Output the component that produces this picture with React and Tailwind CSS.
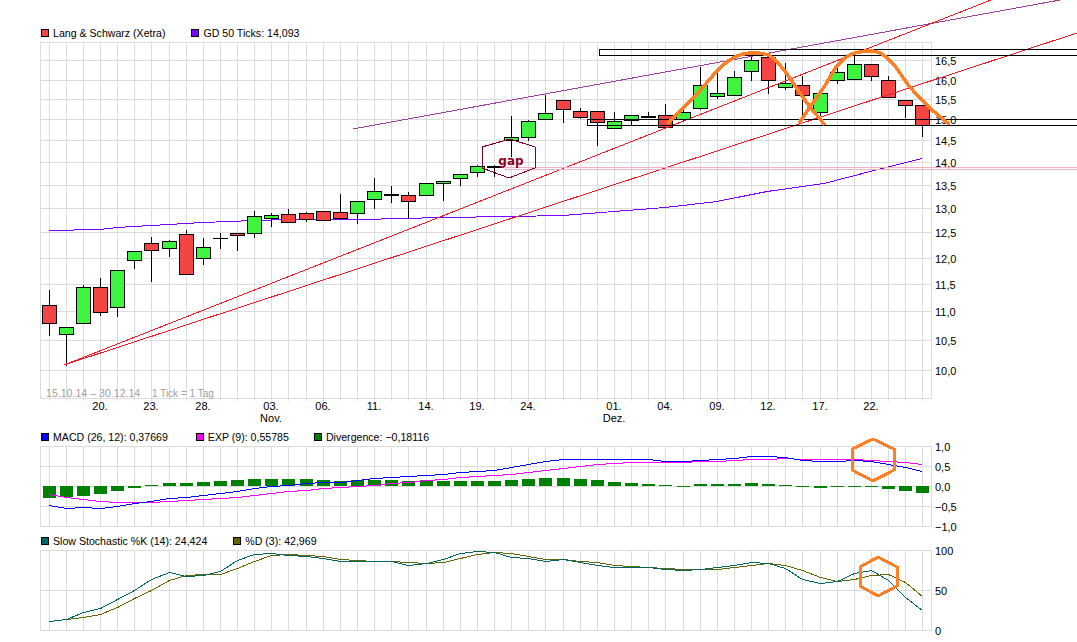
import React from 'react';

// x pixel column of each tick
const XS = [49,66,83,100,117,134,151,169,186,203,220,237,254,271,288,306,323,340,357,374,391,408,426,443,460,477,494,511,528,545,563,580,597,614,631,648,665,683,700,717,734,751,768,785,802,820,837,854,871,888,905,922];
const GRID = '#dcdcdc';
const RED = '#f44444';
const GREEN = '#3ef43e';
const ORANGE = '#ff8024';

// high, body top, body bottom, low, kind
const CANDLES = [
  [290,305,323,335,'r'],[327,327,334,365,'g'],[285,287,323,323,'g'],[278,287,312,315,'r'],[270,270,307,316,'g'],
  [251,251,260,268,'g'],[237,243,250,281,'r'],[240,241,248,256,'g'],[230,234,274,274,'r'],[238,247,258,264,'g'],
  [233,238,238,248,'d'],[233,233,235,250,'r'],[211,216,233,237,'g'],[213,215,218,226,'g'],[209,214,222,222,'r'],
  [212,213,219,221,'r'],[211,211,220,220,'r'],[194,212,218,218,'r'],[201,201,213,223,'g'],[178,191,199,208,'g'],
  [186,194,195,202,'d'],[192,195,201,218,'r'],[183,183,195,195,'g'],[181,181,183,200,'g'],[174,174,178,185,'g'],
  [165,166,172,176,'g'],[165,166,167,176,'d'],[116,137,140,156,'g'],[120,121,137,140,'g'],[95,113,119,119,'g'],
  [100,100,109,122,'r'],[108,111,117,118,'r'],[111,111,122,145,'r'],[112,121,128,128,'g'],[115,115,120,125,'g'],
  [112,116,117,117,'d'],[104,115,127,127,'r'],[109,112,119,120,'g'],[67,85,108,109,'g'],[69,93,96,98,'g'],
  [71,77,95,95,'g'],[55,60,71,80,'g'],[53,57,80,93,'r'],[63,83,87,89,'g'],[76,85,95,117,'r'],
  [93,93,112,115,'g'],[63,72,80,83,'g'],[52,64,79,79,'g'],[64,64,76,80,'r'],[76,80,97,97,'r'],
  [100,100,105,117,'r'],[105,105,125,136,'r'],
];

const MAIN_H = [60,80,99,119,140,162,185,208,232,258,284,311,340,370];
const MAIN_LABELS = ['16,5','16,0','15,5','15,0','14,5','14,0','13,5','13,0','12,5','12,0','11,5','11,0','10,5','10,0'];
const DATE_LABELS = [[100,'20.'],[151,'23.'],[203,'28.'],[271,'03.','Nov.'],[323,'06.'],[374,'11.'],[426,'14.'],[477,'19.'],[528,'24.'],[614,'01.','Dez.'],[665,'04.'],[717,'09.'],[768,'12.'],[820,'17.'],[871,'22.']];

const MA50 = [[49,230],[66,230],[83,229],[100,229],[117,227],[134,226],[151,225],[169,224],[203,222],[254,220],[290,219],[360,219],[443,217],[511,216],[563,215],[614,211],[665,207],[717,201],[767,191],[824,183],[874,170],[922,158]];

// values are read straight off the 3x crops, y = 425 + v / 3
const HIST = [-12,-11,-10,-8,-5,-2,1,3,3,4,5,6,7,7,7,7,6,5,6,6,6,5,6,5,5,5,5,6,7,8,8,7,6,4,3,2,1,0,2,2,2,3,2,1,-1,-2,-1,-1,-1,-3,-5,-7];
const MACD = [241,250,247,250,244,235,229,220,217,211,205,199,190,184,181,175,172,172,166,160,157,154,150,148,142,139,136,127,118,109,103,103,103,103,103,103,109,109,106,103,100,94,94,97,105,109,109,106,109,118,127,139];
const EXP = [208,217,223,229,232,232,232,229,226,223,220,217,211,205,199,196,190,187,184,181,175,170,166,163,157,154,151,148,142,136,130,124,118,115,112,112,112,112,109,109,106,103,103,100,103,103,103,103,106,109,112,118];
const SLOW_K = [587,583,560,548,521,496,463,442,453,450,439,406,388,385,391,394,400,409,409,409,409,421,415,403,385,379,382,397,400,409,403,412,421,427,427,427,433,436,433,427,421,412,415,430,463,475,469,445,436,466,517,556];
const SLOW_D = [587,583,577,566,545,520,494,466,451,448,448,430,409,391,388,391,394,403,406,409,409,412,415,412,400,388,382,385,394,403,403,409,412,421,424,427,430,433,433,433,427,421,415,421,436,457,469,463,451,448,472,514];

const toPoints = vals => vals.map((v, i) => `${XS[i] + 0.5},${425 + Math.round(v / 3) + 0.5}`).join(' ');

// catmull-rom through the points, for the hand drawn arcs
const smooth = pts => {
  let d = `M${pts[0][0]} ${pts[0][1]}`;
  for (let i = 0; i < pts.length - 1; i++) {
    const p0 = pts[i - 1] || pts[i];
    const p1 = pts[i];
    const p2 = pts[i + 1];
    const p3 = pts[i + 2] || p2;
    d += ` C${p1[0] + (p2[0] - p0[0]) / 6} ${p1[1] + (p2[1] - p0[1]) / 6} ${p2[0] - (p3[0] - p1[0]) / 6} ${p2[1] - (p3[1] - p1[1]) / 6} ${p2[0]} ${p2[1]}`;
  }
  return d;
};

const ARC_LEFT = [[667,124],[695,96],[720,68],[737,56],[754,53],[770,56],[784,70],[800,93],[810,107],[825,125]];
const ARC_RIGHT = [[799,123],[810,107],[824,87],[837,66],[850,55],[867,51],[880,53],[894,65],[910,87],[930,108],[949,124]];

const Legend = ({ items }) => (
  <div className="flex h-[16px] items-center pb-[2px] text-[10.6px]">
    {items.map(item => (
      <div key={item.label} className="flex items-center" style={{ marginLeft: item.left }}>
        <span className="mr-[4px] h-[8px] w-[8px] border border-black" style={{ background: item.color }} />
        <span className="whitespace-nowrap leading-none">{item.label}</span>
      </div>
    ))}
  </div>
);

const Grid = ({ top, bottom, rows, tick = 0 }) => (
  <g stroke={GRID} strokeWidth="1">
    {[top, ...rows, bottom].map(y => <line key={y} x1="40" x2="932" y1={y + 0.5} y2={y + 0.5} />)}
    <line x1="40.5" x2="40.5" y1={top} y2={bottom + 1} />
    <line x1="931.5" x2="931.5" y1={top} y2={bottom + 1} />
    {XS.map(x => <line key={x} x1={x + 0.5} x2={x + 0.5} y1={top} y2={bottom + 1 + tick} />)}
  </g>
);

const Candle = ({ x, c }) => {
  const [high, top, bottom, low, kind] = c;
  return (
    <g>
      <line x1={x + 0.5} x2={x + 0.5} y1={high} y2={low + 1} stroke="#000" />
      {kind === 'd'
        ? <rect x={x - 7} y={top} width="15" height={bottom - top + 1} fill="#000" />
        : <rect x={x - 6.5} y={top + 0.5} width="14" height={bottom - top} fill={kind === 'r' ? RED : GREEN} stroke="#000" />}
    </g>
  );
};

const MainChart = () => (
  <svg className="block overflow-visible" width="1077" height="388" viewBox="0 42 1077 388" shapeRendering="crispEdges">
    <Grid top={42} bottom={398} rows={MAIN_H} tick={2} />
    <polyline points={MA50.map(p => `${p[0]},${p[1] + 0.5}`).join(' ')} fill="none" stroke="#7f00ff" />
    {CANDLES.map((c, i) => <Candle key={i} x={XS[i]} c={c} />)}
    {MAIN_H.map((y, i) => <text key={y} x="935" y={y + 5}>{MAIN_LABELS[i]}</text>)}
    {DATE_LABELS.map(d => (
      <g key={d[0]} textAnchor="middle">
        <text x={d[0]} y="410">{d[1]}</text>
        {d[2] && <text x={d[0]} y="422">{d[2]}</text>}
      </g>
    ))}
    <text x="46" y="397" fill="#a0a0a0" fontSize="10.6">15.10.14 – 30.12.14</text>
    <text x="152" y="397" fill="#a0a0a0" fontSize="10">1 Tick = 1 Tag</text>
  </svg>
);

const MacdChart = () => (
  <svg className="block overflow-visible" width="1077" height="88" viewBox="0 446 1077 88" shapeRendering="crispEdges">
    <Grid top={446} bottom={526} rows={[466, 486, 506]} />
    {HIST.map((v, i) => (
      <rect key={i} x={XS[i] - 6} y={v > 0 ? 486 - v : 486} width="13" height={Math.max(Math.abs(v), 1)} fill="#008000" />
    ))}
    <polyline points={toPoints(EXP)} fill="none" stroke="#ff00ff" />
    <polyline points={toPoints(MACD)} fill="none" stroke="#0000ff" />
    {[['1,0',451],['0,5',471],['0,0',491],['−0,5',511],['−1,0',531]].map(l => (
      <text key={l[0]} x="935" y={l[1]}>{l[0]}</text>
    ))}
  </svg>
);

const StochChart = () => (
  <svg className="block overflow-visible" width="1077" height="92" viewBox="0 550 1077 92" shapeRendering="crispEdges">
    <Grid top={550} bottom={630} rows={[590]} />
    <polyline points={toPoints(SLOW_D)} fill="none" stroke="#666600" />
    <polyline points={toPoints(SLOW_K)} fill="none" stroke="#006666" />
    {[['100',555],['50',595],['0',635]].map(l => (
      <text key={l[0]} x="935" y={l[1]}>{l[0]}</text>
    ))}
  </svg>
);

// hand drawn lines lie over all three panels
const Annotations = () => (
  <svg className="pointer-events-none absolute left-0 top-0" width="1077" height="642" viewBox="0 0 1077 642" shapeRendering="crispEdges">
    <line x1="353" y1="129" x2="1060" y2="0" stroke="#a040a0" />
    <line x1="64" y1="365" x2="991" y2="0" stroke="#f01c2c" />
    <line x1="64" y1="365" x2="1077" y2="33" stroke="#f01c2c" />
    <path d="M1077 167.5H505.5V169.5H1077" fill="none" stroke="#f0b0c4" />
    <path d="M1077 49.5H599.5V55.5H1077" fill="none" stroke="#000" />
    <path d="M1077 119.5H587.5V125.5H1077" fill="none" stroke="#000" />
    <polygon points="510,139 535,147 535,168 509,178 482,168 482,147" fill="none" stroke="#800020" />
    <text x="511" y="165" textAnchor="middle" fill="#900020" fontSize="12" fontWeight="700" style={{ fontFamily: "'DejaVu Sans', sans-serif" }}>gap</text>
    <path d={smooth(ARC_LEFT)} fill="none" stroke={ORANGE} strokeWidth="3.5" />
    <path d={smooth(ARC_RIGHT)} fill="none" stroke={ORANGE} strokeWidth="3.5" />
    <polygon points="873,439 894,449 894,470 873,481 852,470 852,449" fill="none" stroke={ORANGE} strokeWidth="3" />
    <polygon points="878,557 897,567 897,586 878,596 860,586 860,567" fill="none" stroke={ORANGE} strokeWidth="3" />
  </svg>
);

export default function App() {
  return (
    <div className="relative h-[642px] w-[1077px] overflow-hidden bg-white pt-[26px] font-['Liberation_Sans',sans-serif] text-[11px] text-black">
      <Legend items={[
        { label: 'Lang & Schwarz (Xetra)', color: RED, left: 41 },
        { label: 'GD 50 Ticks: 14,093', color: '#7f00ff', left: 26 },
      ]} />
      <MainChart />
      <Legend items={[
        { label: 'MACD (26, 12): 0,37669', color: '#0000ff', left: 41 },
        { label: 'EXP (9): 0,55785', color: '#ff00ff', left: 28 },
        { label: 'Divergence: −0,18116', color: '#008000', left: 25 },
      ]} />
      <MacdChart />
      <Legend items={[
        { label: 'Slow Stochastic %K (14): 24,424', color: '#006666', left: 41 },
        { label: '%D (3): 42,969', color: '#666600', left: 26 },
      ]} />
      <StochChart />
      <Annotations />
    </div>
  );
}
